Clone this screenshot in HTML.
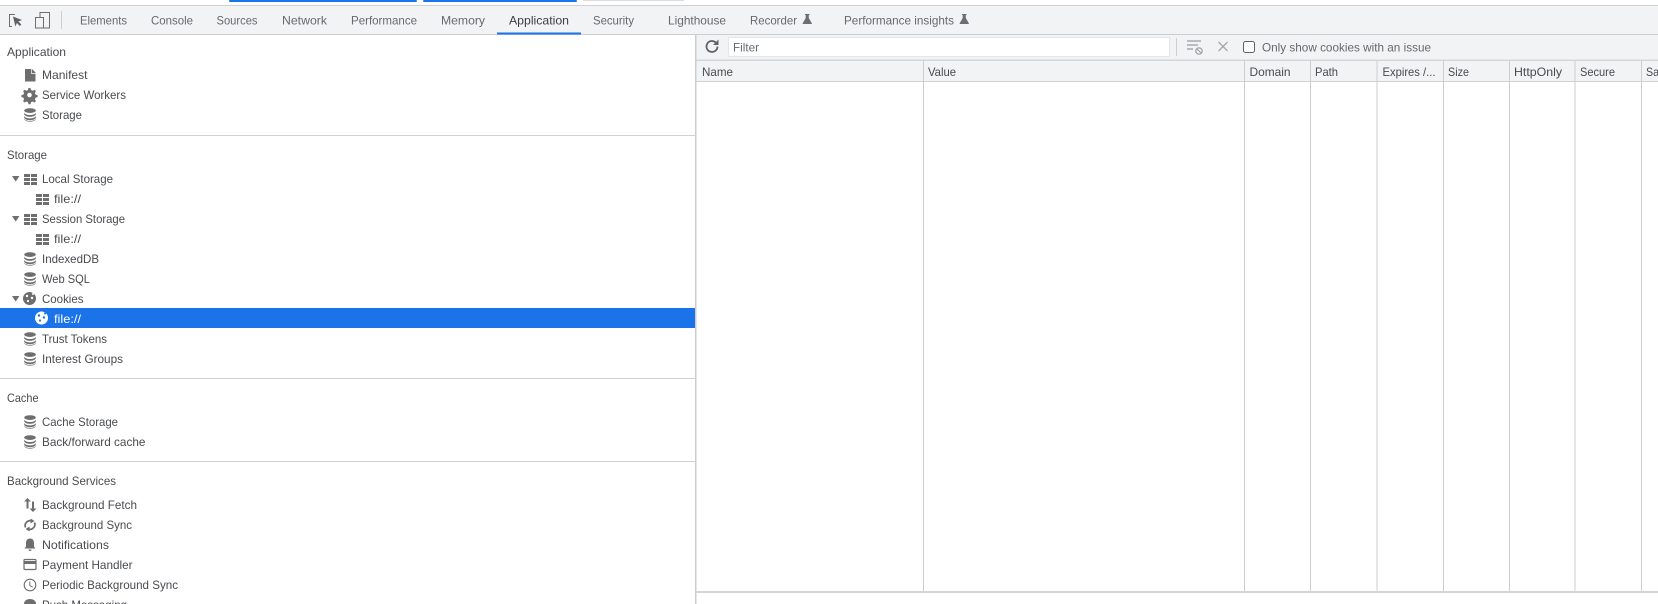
<!DOCTYPE html>
<html><head><meta charset="utf-8"><style>
html,body{margin:0;padding:0;background:#fff;width:1658px;height:604px;overflow:hidden}
svg{display:block;position:absolute;left:0;top:0}
text{font-family:"Liberation Sans",sans-serif;font-size:12px;fill:#484b4f}
.t text{fill:#666a6e}
</style></head><body>
<svg width="1658" height="604" viewBox="0 0 1658 604" xmlns="http://www.w3.org/2000/svg">
<defs>
<g id="db" fill="#6e6e6e"><ellipse cx="6" cy="2.600" rx="5.800" ry="2.400"/><path d="M.2 4.600C1 6.400 3.500 7 6 7s5-.6 5.800-2.400V6.400C11 8.200 8.500 8.800 6 8.800S1 8.200.2 6.400zM.2 8C1 9.800 3.500 10.400 6 10.400s5-.6 5.800-2.400v1.800C11 11.600 8.500 12.200 6 12.200S1 11.600.2 9.800z"/><path d="M.2 10.800C1 12.400 3.500 13 6 13s5-.6 5.800-2.200v.4C11 13 8.500 13.600 6 13.600S1 13 .2 11.200z"/></g>
<g id="grid" fill="#6e6e6e"><rect x="0" y="0" width="6" height="3"/><rect x="7" y="0" width="6" height="3"/><rect x="0" y="4" width="6" height="3"/><rect x="7" y="4" width="6" height="3"/><rect x="0" y="8" width="6" height="3"/><rect x="7" y="8" width="6" height="3"/></g>
<path id="arrow" d="M0 0h7.400L3.700 5.600z" fill="#6e6e6e"/>
<g id="flask"><path d="M2.500 0h4.500v1H6.300v3l3 5.200c.2.400 0 .8-.5.8H.7c-.5 0-.7-.4-.5-.8l3-5.200V1H2.500z" fill="#6b6f73"/></g>
</defs>

<rect width="1658" height="604" fill="#fff"/>
<!-- browser top remnants -->
<rect x="229" y="0" width="188" height="2" rx="1" fill="#1a73e8"/>
<rect x="423" y="0" width="154" height="2" rx="1" fill="#1a73e8"/>
<rect x="583" y="0" width="101" height="1" fill="#dadce0"/>
<!-- tab bar -->
<rect x="0" y="6" width="1658" height="29" fill="#f1f3f4"/>
<rect x="0" y="5" width="1658" height="1" fill="#cfd1d3"/>
<rect x="0" y="34" width="1658" height="1" fill="#cbcdcf"/>
<rect x="497" y="32.500" width="84" height="2" fill="#1a73e8"/>
<!-- inspect icon -->
<path d="M15 14.500H9.500v12H12" fill="none" stroke="#6e6e6e" stroke-width="1"/>
<path d="M13 16.500l9 3.500-3.600 1.500 3 3-1.500 1.500-3-3-1.500 3.500z" fill="#5f6368"/>
<!-- device icon -->
<rect x="35.500" y="17.500" width="8" height="10.500" fill="#f1f3f4" stroke="#6e6e6e"/>
<path d="M40 17V12.500h9.500v15.500H43.500" fill="none" stroke="#6e6e6e"/>
<rect x="61" y="11" width="1" height="18" fill="#cdcfd1"/>
<g class="t">
<text x="80" y="24.500" textLength="47" lengthAdjust="spacingAndGlyphs">Elements</text>
<text x="151" y="24.500" textLength="42" lengthAdjust="spacingAndGlyphs">Console</text>
<text x="216.500" y="24.500" textLength="41" lengthAdjust="spacingAndGlyphs">Sources</text>
<text x="282" y="24.500" textLength="45" lengthAdjust="spacingAndGlyphs">Network</text>
<text x="351" y="24.500" textLength="66" lengthAdjust="spacingAndGlyphs">Performance</text>
<text x="441" y="24.500" textLength="44" lengthAdjust="spacingAndGlyphs">Memory</text>
<text x="509" y="24.500" textLength="60" lengthAdjust="spacingAndGlyphs" style="fill:#3c4043">Application</text>
<text x="593" y="24.500" textLength="41" lengthAdjust="spacingAndGlyphs">Security</text>
<text x="668" y="24.500" textLength="58" lengthAdjust="spacingAndGlyphs">Lighthouse</text>
<text x="750" y="24.500" textLength="47" lengthAdjust="spacingAndGlyphs">Recorder</text>
<text x="844" y="24.500" textLength="110" lengthAdjust="spacingAndGlyphs">Performance insights</text>
</g>
<use href="#flask" x="802.500" y="14"/>
<use href="#flask" x="959.500" y="14"/>

<!-- right toolbar -->
<rect x="696" y="35" width="962" height="25" fill="#f1f3f4"/>
<path d="M717.500 46.500a5.500 5.500 0 1 1-1.700-4" fill="none" stroke="#5f6368" stroke-width="1.800"/>
<path d="M718.500 39.500v5.500h-5.500z" fill="#5f6368"/>
<rect x="728.500" y="37.500" width="441" height="19" fill="#fff" stroke="#e4e6e8"/>
<text x="733" y="51.500" textLength="26" lengthAdjust="spacingAndGlyphs" style="fill:#666a6e">Filter</text>
<rect x="1176" y="38" width="1" height="18" fill="#cdcfd1"/>
<path d="M1187 41h14M1187 45h11M1187 49h6" stroke="#9a9da0" stroke-width="1.300" fill="none"/>
<circle cx="1199" cy="51" r="3.200" fill="none" stroke="#9a9da0" stroke-width="1.200"/>
<path d="M1197 49l4 4" stroke="#9a9da0" stroke-width="1"/>
<path d="M1218.500 42l9 9M1227.500 42l-9 9" stroke="#a6a9ac" stroke-width="1.300" fill="none"/>
<rect x="1243.500" y="41.500" width="11" height="11" rx="2" fill="#fff" stroke="#5f6368"/>
<text x="1262" y="51.500" textLength="169" lengthAdjust="spacingAndGlyphs" style="fill:#666a6e">Only show cookies with an issue</text>

<!-- table -->
<rect x="696" y="60" width="962" height="22" fill="#f1f3f4"/>
<rect x="696" y="59.500" width="962" height="1.500" fill="#d4d6d8"/>
<rect x="696" y="81" width="962" height="1" fill="#cfd1d3"/>
<g fill="#cbcdcf">
<rect x="923" y="61" width="1" height="530"/>
<rect x="1244" y="61" width="1" height="530"/>
<rect x="1310" y="61" width="1" height="530"/>
<rect x="1376.500" y="61" width="1" height="530"/>
<rect x="1443" y="61" width="1" height="530"/>
<rect x="1509" y="61" width="1" height="530"/>
<rect x="1574.500" y="61" width="1" height="530"/>
<rect x="1641" y="61" width="1" height="530"/>
</g>
<rect x="695" y="35" width="1.500" height="569" fill="#cbcdcf"/>
<rect x="696" y="591" width="962" height="2" fill="#d2d4d6"/>
<text x="702" y="76" textLength="31" lengthAdjust="spacingAndGlyphs">Name</text>
<text x="928" y="76" textLength="28" lengthAdjust="spacingAndGlyphs">Value</text>
<text x="1249.500" y="76" textLength="41" lengthAdjust="spacingAndGlyphs">Domain</text>
<text x="1315" y="76" textLength="23" lengthAdjust="spacingAndGlyphs">Path</text>
<text x="1382.500" y="76" textLength="53" lengthAdjust="spacingAndGlyphs">Expires /...</text>
<text x="1448" y="76" textLength="21" lengthAdjust="spacingAndGlyphs">Size</text>
<text x="1514" y="76" textLength="48" lengthAdjust="spacingAndGlyphs">HttpOnly</text>
<text x="1580" y="76" textLength="35" lengthAdjust="spacingAndGlyphs">Secure</text>
<text x="1646" y="76" textLength="13" lengthAdjust="spacingAndGlyphs">Sa</text>

<!-- sidebar separators -->
<rect x="0" y="135" width="695" height="1" fill="#cfd1d3"/>
<rect x="0" y="378" width="695" height="1" fill="#cfd1d3"/>
<rect x="0" y="461" width="695" height="1" fill="#cfd1d3"/>
<rect x="0" y="308" width="695" height="20" fill="#1a73e8"/>

<!-- headings -->
<text x="7" y="56" textLength="59" lengthAdjust="spacingAndGlyphs">Application</text>
<text x="7" y="159" textLength="40" lengthAdjust="spacingAndGlyphs">Storage</text>
<text x="7" y="402" textLength="31.500" lengthAdjust="spacingAndGlyphs">Cache</text>
<text x="7" y="485" textLength="109" lengthAdjust="spacingAndGlyphs">Background Services</text>

<!-- Application items -->
<path d="M25 69h7l3.500 3.500V81.500H25z" fill="#6e6e6e"/>
<path d="M31.500 69v4.500H35.500" fill="none" stroke="#fff" stroke-width=".7"/>
<text x="42" y="79" textLength="45.500" lengthAdjust="spacingAndGlyphs">Manifest</text>
<g transform="translate(29.500 95)">
<path d="M-1 -7h2l.5 2 1.600.7 1.900-1 1.400 1.400-1 1.900.7 1.600 2 .5v2l-2 .5-.7 1.600 1 1.900-1.400 1.400-1.900-1-1.600.7-.5 2h-2l-.5-2-1.600-.7-1.900 1-1.400-1.400 1-1.900-.7-1.600-2-.5v-2l2-.5.7-1.600-1-1.900 1.400-1.400 1.900 1 1.600-.7z" fill="#6e6e6e"/>
<circle cx="0" cy="0" r="2.300" fill="#fff"/>
</g>
<text x="42" y="99" textLength="84" lengthAdjust="spacingAndGlyphs">Service Workers</text>
<use href="#db" x="24" y="108"/>
<text x="42" y="119" textLength="40" lengthAdjust="spacingAndGlyphs">Storage</text>

<!-- Storage items -->
<use href="#arrow" x="12" y="176"/>
<use href="#grid" x="24" y="174"/>
<text x="42" y="183" textLength="71" lengthAdjust="spacingAndGlyphs">Local Storage</text>
<use href="#grid" x="36" y="194"/>
<text x="54" y="203" textLength="27" lengthAdjust="spacingAndGlyphs">file://</text>
<use href="#arrow" x="12" y="216"/>
<use href="#grid" x="24" y="214"/>
<text x="42" y="223" textLength="83" lengthAdjust="spacingAndGlyphs">Session Storage</text>
<use href="#grid" x="36" y="234"/>
<text x="54" y="243" textLength="27" lengthAdjust="spacingAndGlyphs">file://</text>
<use href="#db" x="24" y="252"/>
<text x="42" y="263" textLength="57" lengthAdjust="spacingAndGlyphs">IndexedDB</text>
<use href="#db" x="24" y="272"/>
<text x="42" y="283" textLength="48" lengthAdjust="spacingAndGlyphs">Web SQL</text>
<use href="#arrow" x="12" y="296"/>
<circle cx="29.500" cy="298.500" r="6.500" fill="#6e6e6e"/>
<g fill="#fff"><circle cx="27" cy="296" r="1.200"/><circle cx="32" cy="298" r="1.200"/><circle cx="28" cy="301" r="1.100"/><circle cx="33" cy="294" r="1"/></g>
<text x="42" y="303" textLength="41.500" lengthAdjust="spacingAndGlyphs">Cookies</text>
<circle cx="41.500" cy="318" r="6.500" fill="#fff"/>
<g fill="#1a73e8"><circle cx="39" cy="315.500" r="1.200"/><circle cx="44" cy="317.500" r="1.200"/><circle cx="40" cy="320.500" r="1.100"/><circle cx="45" cy="313.500" r="1"/></g>
<text x="54" y="323" textLength="27" lengthAdjust="spacingAndGlyphs" style="fill:#fff">file://</text>
<use href="#db" x="24" y="332"/>
<text x="42" y="343" textLength="65" lengthAdjust="spacingAndGlyphs">Trust Tokens</text>
<use href="#db" x="24" y="352"/>
<text x="42" y="363" textLength="81" lengthAdjust="spacingAndGlyphs">Interest Groups</text>

<!-- Cache -->
<use href="#db" x="24" y="415"/>
<text x="42" y="426" textLength="76" lengthAdjust="spacingAndGlyphs">Cache Storage</text>
<use href="#db" x="24" y="435"/>
<text x="42" y="446" textLength="103.500" lengthAdjust="spacingAndGlyphs">Back/forward cache</text>

<!-- Background -->
<path d="M27.500 498l-3.500 3.500h2.500v7h2v-7H31z" fill="#6e6e6e"/>
<path d="M33 512l3.500-3.500H34v-7h-2v7h-2.500z" fill="#6e6e6e"/>
<text x="42" y="509" textLength="95" lengthAdjust="spacingAndGlyphs">Background Fetch</text>
<g fill="none" stroke="#6e6e6e" stroke-width="1.700"><path d="M25.500 527.500a5 5 0 0 1 6.500-6.500"/><path d="M34.500 522.500a5 5 0 0 1-6.500 6.500"/></g>
<path d="M30.500 518.500l4 2.500-4 2.500zM29.500 526.500l-4 2.500 4 2.500z" fill="#6e6e6e"/>
<text x="42" y="529" textLength="90" lengthAdjust="spacingAndGlyphs">Background Sync</text>
<path d="M30 538.500c2.800 0 4 2 4 4.500v3.500l1.500 2h-11l1.500-2V543c0-2.500 1.200-4.500 4-4.500zM28.500 549.500h3a1.500 1.500 0 0 1-3 0z" fill="#6e6e6e"/>
<text x="42" y="549" textLength="67" lengthAdjust="spacingAndGlyphs">Notifications</text>
<rect x="24" y="559.500" width="12" height="10" rx="1" fill="none" stroke="#6e6e6e" stroke-width="1.200"/>
<rect x="24" y="561" width="12" height="3" fill="#6e6e6e"/>
<text x="42" y="569" textLength="90.500" lengthAdjust="spacingAndGlyphs">Payment Handler</text>
<circle cx="30" cy="585" r="5.800" fill="none" stroke="#6e6e6e" stroke-width="1.100"/>
<path d="M29.800 581.500v4l2.800 1.700" fill="none" stroke="#6e6e6e"/>
<text x="42" y="589" textLength="136" lengthAdjust="spacingAndGlyphs">Periodic Background Sync</text>
<path d="M24 604c0-3 2.500-5 6-5s6 2 6 5z" fill="#6e6e6e"/>
<text x="42" y="609" textLength="85" lengthAdjust="spacingAndGlyphs">Push Messaging</text>
</svg>
</body></html>
